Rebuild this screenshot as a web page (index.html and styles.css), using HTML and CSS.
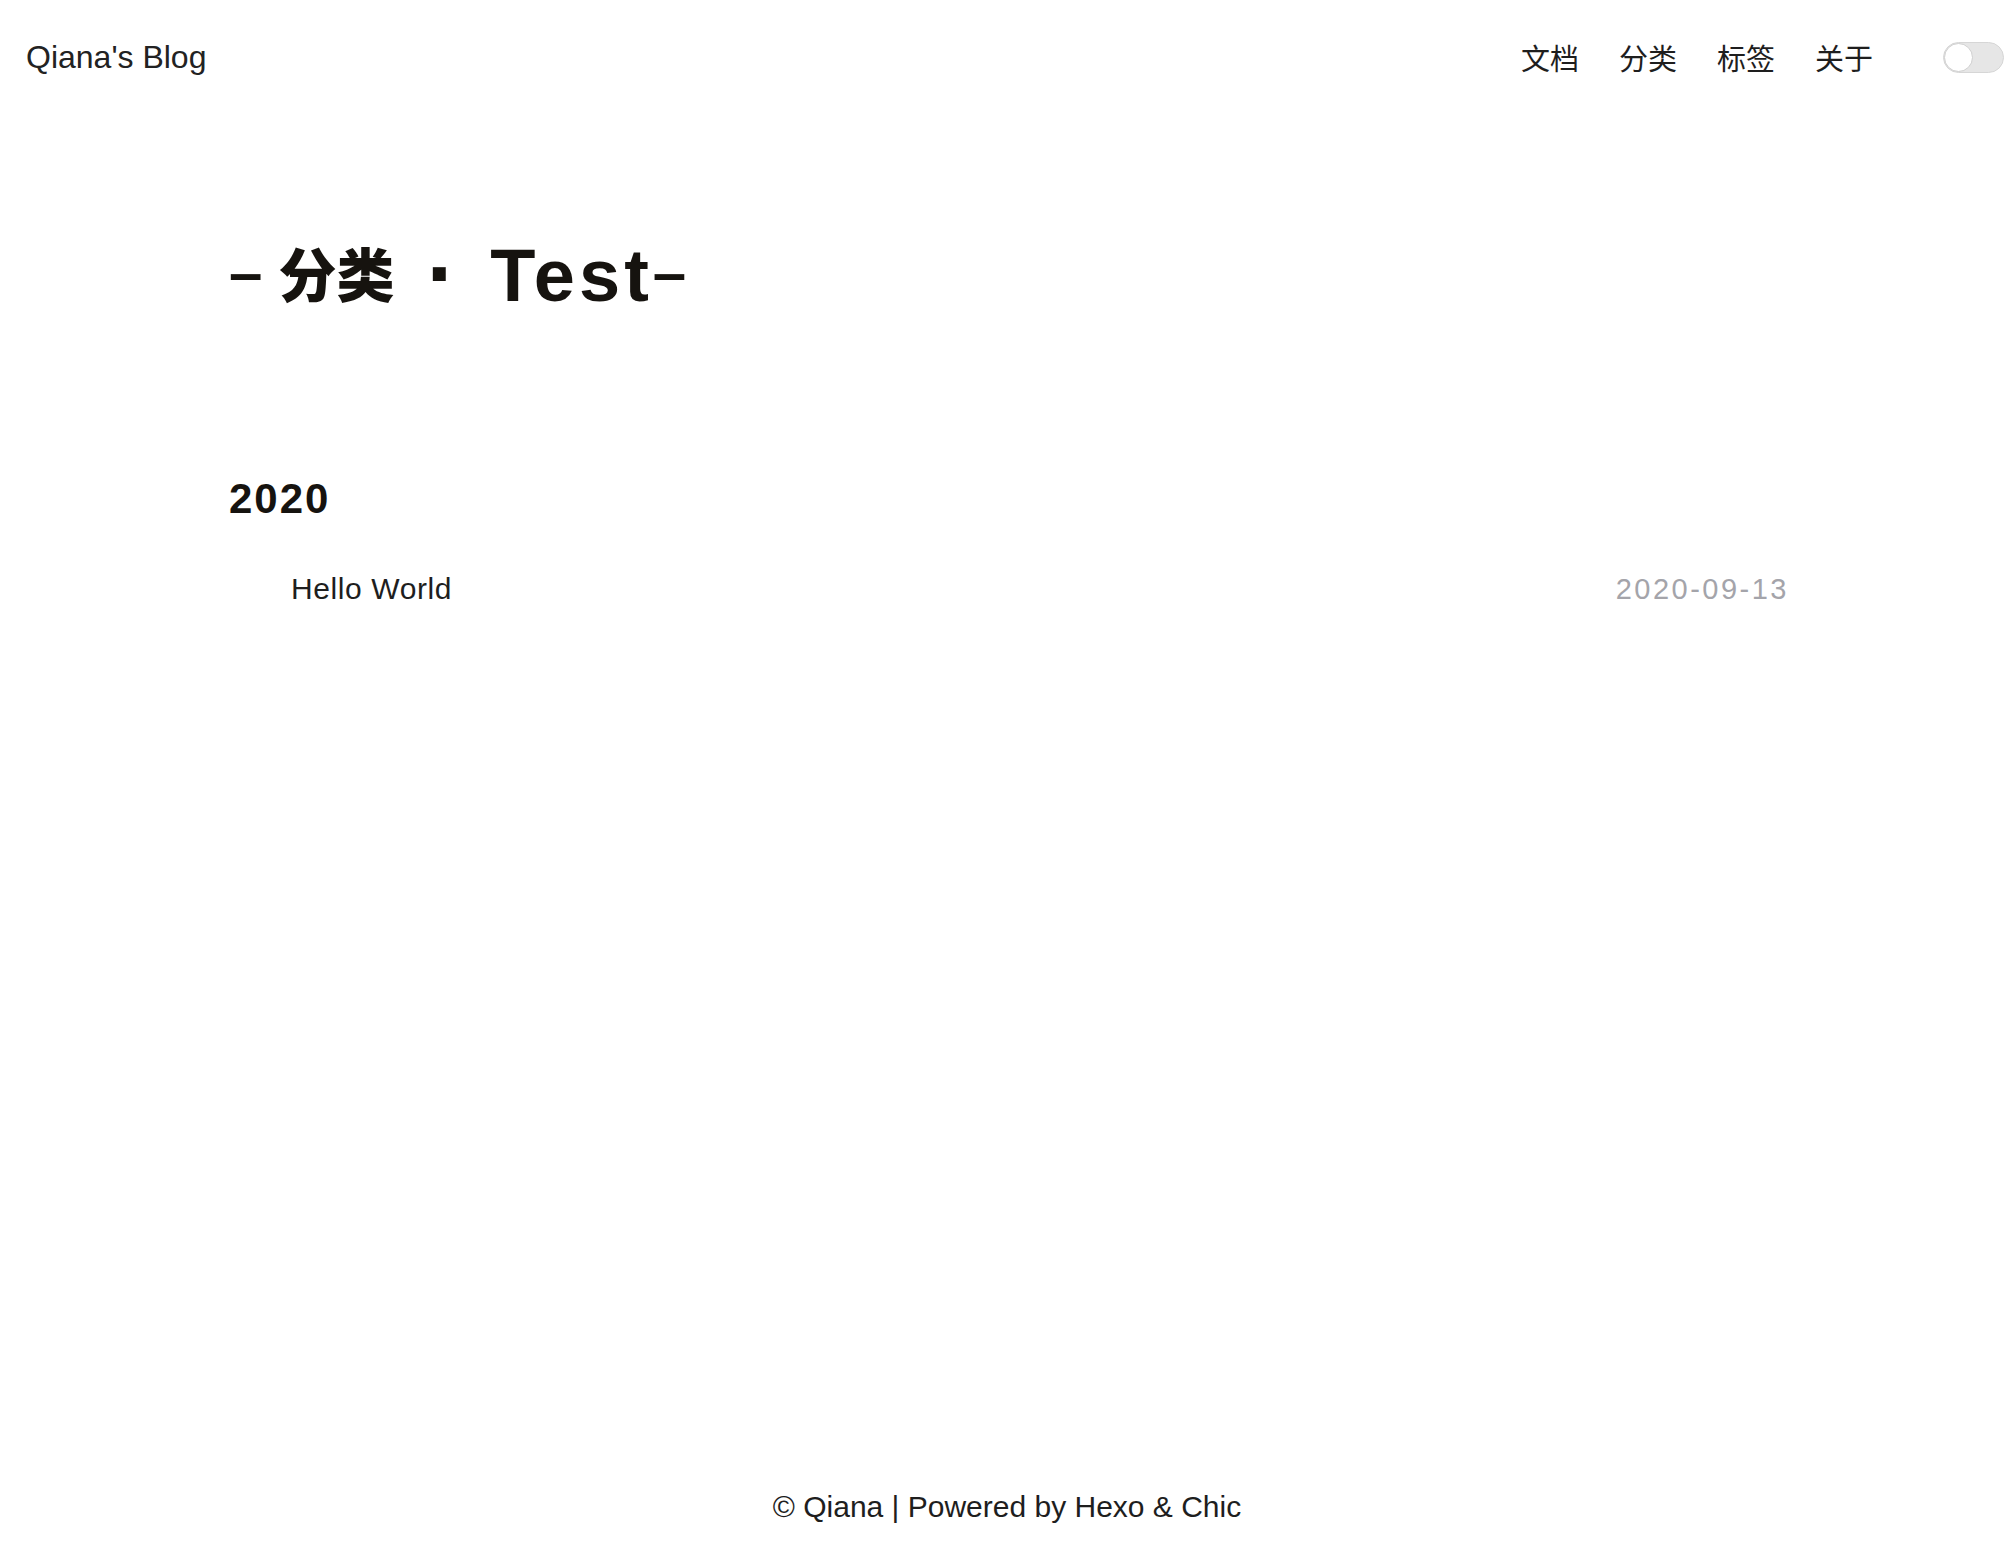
FILE: index.html
```html
<!DOCTYPE html>
<html lang="zh-CN">
<head>
<meta charset="utf-8">
<title>分类: Test | Qiana's Blog</title>
<link rel="stylesheet" href="styles.css">
</head>
<body>
<div class="page">
  <header class="header">
    <a class="logo" href="#">Qiana's Blog</a>
    <div class="header-right">
      <nav class="nav">
        <a href="#">文档</a>
        <a href="#">分类</a>
        <a href="#">标签</a>
        <a href="#">关于</a>
      </nav>
      <span class="toggle"><span class="knob"></span></span>
    </div>
  </header>

  <main class="main">
    <h1 class="page-title"><span class="dash">–</span> <span class="cjk">分类</span><span class="sep">·</span><span class="latin">Test</span><span class="dash">–</span></h1>

    <section class="year-group">
      <h2 class="year">2020</h2>
      <ul class="post-list">
        <li class="post-item">
          <a class="post-link" href="#">Hello World</a>
          <span class="post-date">2020-09-13</span>
        </li>
      </ul>
    </section>
  </main>

  <footer class="footer">© Qiana | Powered by Hexo &amp; Chic</footer>
</div>
</body>
</html>
```

FILE: styles.css
```css
html, body {
  margin: 0;
  padding: 0;
  background: #ffffff;
}

body {
  font-family: "Liberation Sans", "Noto Sans CJK SC", sans-serif;
  color: #1e1e1e;
}

a {
  color: inherit;
  text-decoration: none;
}

.page {
  min-height: 100vh;
  display: flex;
  flex-direction: column;
}

.header {
  height: 114px;
  display: flex;
  align-items: center;
  justify-content: space-between;
  padding: 0 10px 0 26px;
}

.logo {
  font-size: 32px;
  line-height: 40px;
  color: #222222;
}

.header-right {
  display: flex;
  align-items: center;
}

.nav {
  display: flex;
  gap: 40px;
  margin-right: 70px;
}

.nav a {
  font-family: "Noto Sans CJK SC", sans-serif;
  font-size: 29px;
  line-height: 40px;
  color: #1e1e1e;
}

.toggle {
  position: relative;
  display: block;
  width: 59px;
  height: 29px;
  border: 1px solid #d6d6d6;
  border-radius: 16px;
  background: #e6e6e6;
}

.knob {
  position: absolute;
  left: 0;
  top: 0;
  width: 27px;
  height: 27px;
  border: 1px solid #cfcfcf;
  border-radius: 50%;
  background: #ffffff;
}

.main {
  flex: 1;
  width: 1556px;
  margin: 0 auto;
}

.page-title {
  margin: 118px 0 0 0;
  font-size: 58px;
  line-height: 80px;
  height: 80px;
  font-weight: 700;
  color: #16130f;
  white-space: pre;
}

.page-title .dash {
  font-size: 60px;
  line-height: 0;
  vertical-align: 8px;
}

.page-title .cjk {
  font-family: "Noto Sans CJK SC", sans-serif;
  font-weight: 900;
  vertical-align: 4px;
}

.page-title .sep {
  font-size: 92px;
  line-height: 0;
  vertical-align: -4px;
  margin: 0 33px 0 32px;
}

.page-title .latin {
  font-size: 74px;
  letter-spacing: 4px;
}

.year {
  margin: 162px 0 0 0;
  font-size: 42px;
  line-height: 50px;
  font-weight: 700;
  letter-spacing: 2px;
  color: #16130f;
}

.post-list {
  list-style: none;
  margin: 42px 0 0 0;
  padding: 0 0 0 62px;
}

.post-item {
  display: flex;
  justify-content: space-between;
  align-items: baseline;
}

.post-link {
  font-size: 30px;
  line-height: 45px;
  letter-spacing: 0.6px;
  color: #1e1e1e;
}

.post-date {
  font-size: 29px;
  line-height: 45px;
  letter-spacing: 2.5px;
  margin-right: -4px;
  color: #a4a4aa;
}

.footer {
  text-align: center;
  font-size: 30px;
  line-height: 45px;
  padding-bottom: 39px;
  color: #1e1e1e;
}
```
